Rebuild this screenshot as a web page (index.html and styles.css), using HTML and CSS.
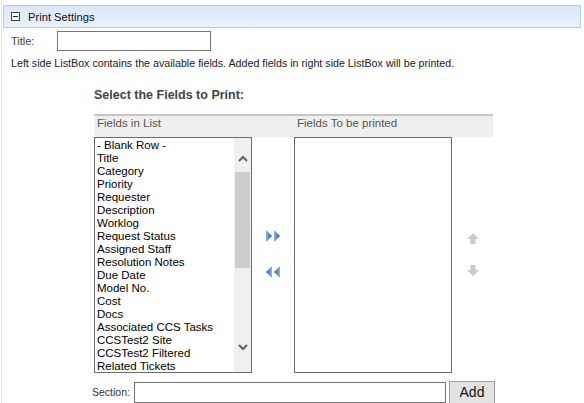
FILE: index.html
```html
<!DOCTYPE html>
<html>
<head>
<meta charset="utf-8">
<link rel="stylesheet" href="styles.css">
</head>
<body>
<div class="page">
  <div class="header">
    <svg class="collapse" width="9" height="9" viewBox="0 0 9 9"><rect x="0.5" y="0.5" width="8" height="8" fill="#fff" stroke="#444"/><line x1="2" y1="4.5" x2="7" y2="4.5" stroke="#222"/></svg>
    <span class="header-title">Print Settings</span>
  </div>
  <div class="title-row">
    <span class="label">Title:</span>
    <input class="text-input title-input" type="text">
  </div>
  <p class="desc">Left side ListBox contains the available fields. Added fields in right side ListBox will be printed.</p>
  <div class="selector">
    <h3 class="selector-title">Select the Fields to Print:</h3>
    <div class="grid">
      <div class="band">
        <span class="band-cell band-left">Fields in List</span>
        <span class="band-cell band-right">Fields To be printed</span>
      </div>
      <div class="listbox">
        <div class="items">
          <div>- Blank Row -</div>
          <div>Title</div>
          <div>Category</div>
          <div>Priority</div>
          <div>Requester</div>
          <div>Description</div>
          <div>Worklog</div>
          <div>Request Status</div>
          <div>Assigned Staff</div>
          <div>Resolution Notes</div>
          <div>Due Date</div>
          <div>Model No.</div>
          <div>Cost</div>
          <div>Docs</div>
          <div>Associated CCS Tasks</div>
          <div>CCSTest2 Site</div>
          <div>CCSTest2 Filtered</div>
          <div>Related Tickets</div>
        </div>
        <div class="scrollbar">
          <div class="sb-btn sb-up"><svg width="10" height="7" viewBox="0 0 10 7"><polyline points="1,6 5,2 9,6" fill="none" stroke="#606060" stroke-width="2"/></svg></div>
          <div class="sb-thumb"></div>
          <div class="sb-track"></div>
          <div class="sb-btn sb-down"><svg width="10" height="7" viewBox="0 0 10 7"><polyline points="1,1 5,5 9,1" fill="none" stroke="#606060" stroke-width="2"/></svg></div>
        </div>
      </div>
      <div class="mid-col">
        <svg width="16" height="12" viewBox="0 0 16 12">
          <defs><linearGradient id="gr" x1="0" y1="0" x2="1" y2="0"><stop offset="0" stop-color="#8ab8ec"/><stop offset="1" stop-color="#2858a4"/></linearGradient></defs>
          <polygon points="1,0 7,6 1,12" fill="url(#gr)"/>
          <polygon points="9,0 15,6 9,12" fill="url(#gr)"/>
        </svg>
        <svg width="16" height="12" viewBox="0 0 16 12">
          <defs><linearGradient id="gl" x1="1" y1="0" x2="0" y2="0"><stop offset="0" stop-color="#8ab8ec"/><stop offset="1" stop-color="#2858a4"/></linearGradient></defs>
          <polygon points="7,0 1,6 7,12" fill="url(#gl)"/>
          <polygon points="15,0 9,6 15,12" fill="url(#gl)"/>
        </svg>
      </div>
      <div class="listbox listbox-empty"></div>
      <div class="order-col">
        <svg width="12" height="11" viewBox="0 0 12 11"><polygon points="6,0 12,6 8.5,6 8.5,11 3.5,11 3.5,6 0,6" fill="#cacaca"/></svg>
        <svg width="12" height="11" viewBox="0 0 12 11"><polygon points="3.5,0 8.5,0 8.5,5 12,5 6,11 0,5 3.5,5" fill="#cacaca"/></svg>
      </div>
    </div>
    <div class="section-row">
      <span class="label section-label">Section:</span>
      <input class="text-input section-input" type="text">
      <button class="add-btn">Add</button>
    </div>
  </div>
</div>
</body>
</html>
```

FILE: styles.css
```css
* { box-sizing: border-box; }
html, body { margin: 0; padding: 0; background: #fff; }
body { font-family: "Liberation Sans", Arial, sans-serif; color: #333; }

.page {
  width: 584px;
  height: 403px;
  margin-left: 1px;
  border-left: 1px solid #dde7f2;
  padding-top: 5px;
  overflow: hidden;
}

.header {
  margin: 0 4px 0 1px;
  height: 23px;
  border: 1px solid #b2cdec;
  background: linear-gradient(#d9e7f8, #e9f2fd);
  display: flex;
  align-items: center;
  padding-left: 7px;
  gap: 8px;
}
.header-title { font-size: 11.2px; color: #111; }
.collapse { display: block; }

.title-row {
  display: flex;
  align-items: center;
  margin-top: 3px;
  padding-left: 9px;
  height: 20px;
}
.label { font-size: 11px; color: #444; }
.title-row .label { width: 46px; }

.text-input {
  border: 1px solid #767676;
  height: 20px;
  margin: 0;
  padding: 0 2px;
  background: #fff;
}
.title-input { width: 154px; }

.desc {
  margin: 5px 0 0 9px;
  font-size: 10.7px;
  color: #222;
  line-height: 14px;
}

.selector { padding-left: 92px; }
.selector-title {
  margin: 18px 0 0 0;
  font-size: 12.5px;
  font-weight: bold;
  color: #444;
  line-height: 14px;
}

.grid {
  margin-top: 12px;
  display: grid;
  grid-template-columns: 158px 42px 158px 41px;
  grid-template-rows: 23px 236px;
}
.band {
  grid-column: 1 / 5;
  border-top: 2px solid #c6c6c6;
  background: #efefef;
  display: grid;
  grid-template-columns: 200px 199px;
  align-items: start;
  font-size: 11.5px;
  line-height: 14px;
  color: #555;
}
.band-cell { padding-left: 3px; }

.listbox {
  border: 1px solid #6b6b6b;
  display: flex;
  background: #fff;
  overflow: hidden;
}
.items {
  flex: 1;
  padding: 1px 0 0 2px;
  font-size: 11.5px;
  line-height: 13px;
  color: #000;
  white-space: nowrap;
  overflow: hidden;
}
.scrollbar {
  width: 17px;
  background: #f0f0f0;
  display: flex;
  flex-direction: column;
}
.sb-btn { display: flex; justify-content: center; }
.sb-up { height: 34px; align-items: flex-end; padding-bottom: 10px; }
.sb-thumb { height: 96px; background: #cdcdcd; margin: 0 1px; }
.sb-track { flex: 1; }
.sb-down { height: 34px; align-items: flex-start; padding-top: 6px; }
.sb-btn svg { display: block; }

.mid-col, .order-col {
  display: flex;
  flex-direction: column;
  align-items: center;
  padding-top: 93px;
  gap: 24px;
}
.order-col { gap: 21px; padding-top: 96px; }
.mid-col svg, .order-col svg { display: block; }

.section-row {
  margin: 8px 0 0 -2px;
  display: flex;
  align-items: center;
  height: 22px;
}
.section-label { width: 42px; font-size: 10.5px; color: #333; }
.section-input { width: 312px; height: 21px; }
.add-btn {
  margin-left: 3px;
  width: 46px;
  height: 23px;
  border: 1px solid #a0a0a0;
  background: #e3e3e3;
  font-family: "Liberation Sans", Arial, sans-serif;
  font-size: 14px;
  color: #111;
  padding: 0;
}
```
